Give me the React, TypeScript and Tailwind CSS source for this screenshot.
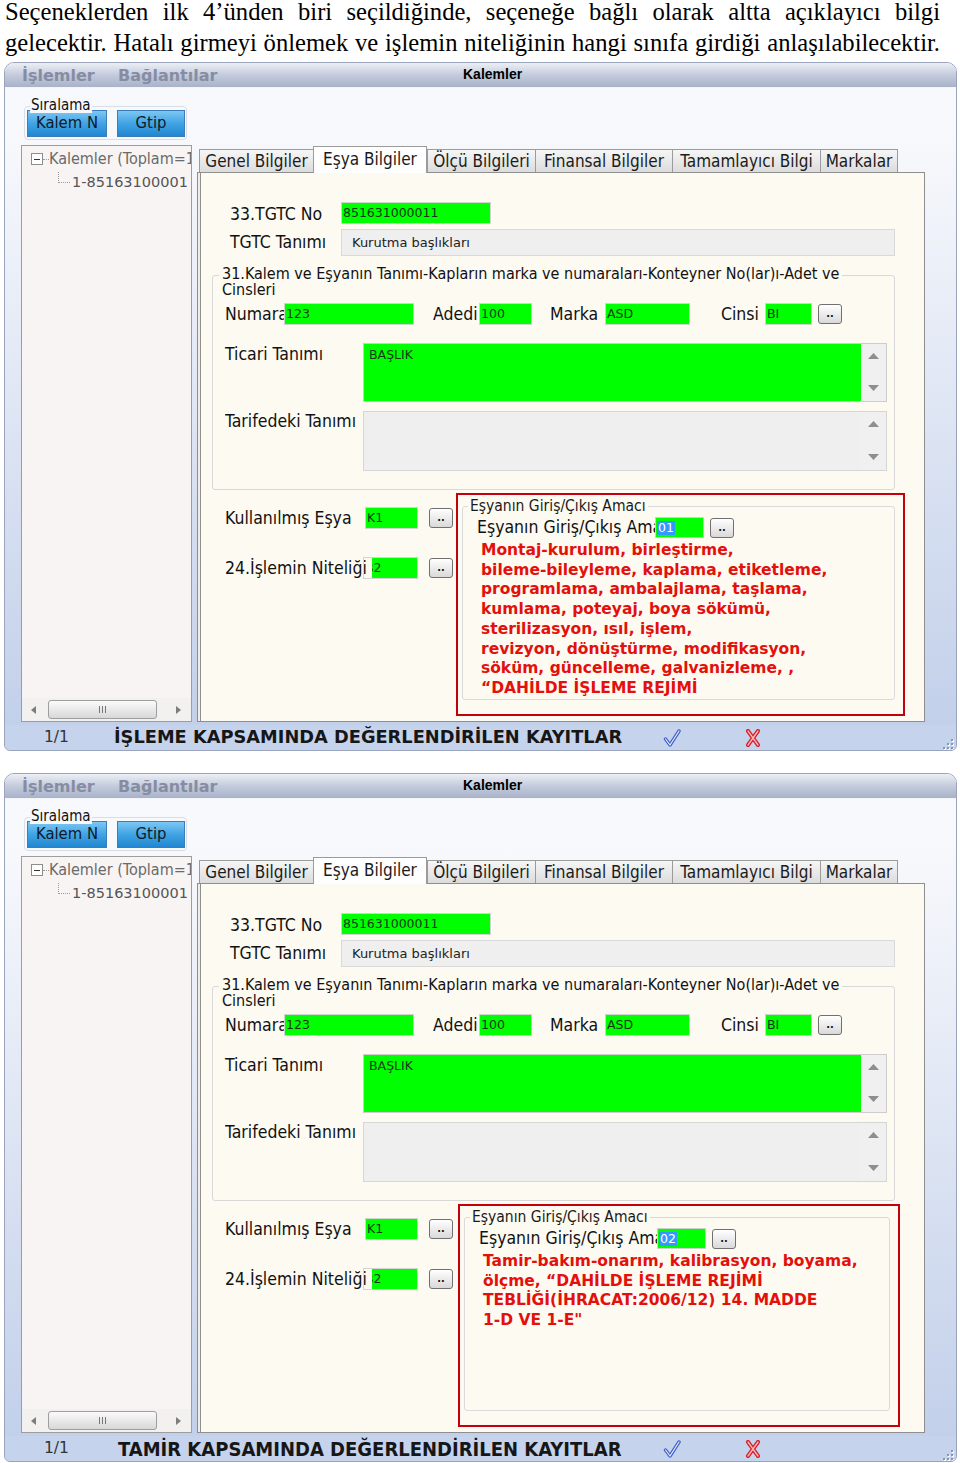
import React from "react";

const ui = "font-['DejaVu_Sans',Verdana,sans-serif] [font-stretch:normal]";
const cond = "font-['DejaVu_Sans_Condensed','DejaVu_Sans',sans-serif] [font-stretch:semi-condensed]";
const arial = "font-['Liberation_Sans',Arial,sans-serif] [font-stretch:normal]";

const islemeLines = [
  "Montaj-kurulum, birleştirme,",
  "bileme-bileyleme, kaplama, etiketleme,",
  "programlama, ambalajlama, taşlama,",
  "kumlama, poteyaj, boya sökümü,",
  "sterilizasyon, ısıl, işlem,",
  "revizyon, dönüştürme, modifikasyon,",
  "söküm, güncelleme, galvanizleme, ,",
  "“DAHİLDE İŞLEME REJİMİ",
];

const tamirLines = [
  "Tamir-bakım-onarım, kalibrasyon, boyama,",
  "ölçme, “DAHİLDE İŞLEME REJİMİ",
  "TEBLİĞİ(İHRACAT:2006/12) 14. MADDE",
  "1-D VE 1-E\"",
];

const Dots = () => (
  <div className="flex h-[20px] w-[24px] shrink-0 items-end justify-center rounded-[3px] border border-[#707070] bg-gradient-to-b from-white to-[#d9d9d9] pb-[4px] text-[11px] font-bold leading-[11px] text-[#111]">
    ..
  </div>
);

const Green = ({ w, text }: { w: string; text: React.ReactNode }) => (
  <div className={`flex h-[22px] ${w} shrink-0 items-center overflow-hidden border border-[#cdd6cd] bg-[#00ff00] pl-[1px] text-[12.5px] leading-none text-[#163816] ${ui}`}>
    {text}
  </div>
);

const Arrow = ({ up }: { up?: boolean }) => (
  <svg width="11" height="6" viewBox="0 0 11 6">
    <path d={up ? "M0 6 L5.5 0 L11 6 Z" : "M0 0 L5.5 6 L11 0 Z"} fill="#8e8e8e" />
  </svg>
);

const ScrollCol = () => (
  <div className="flex w-[25px] shrink-0 flex-col items-center justify-between bg-[#f0f0f0] pb-[10px] pt-[9px]">
    <Arrow up />
    <Arrow />
  </div>
);

const Check = () => (
  <svg width="18" height="18" viewBox="0 0 18 18">
    <path d="M2.5 10 L7 16 L16 2" fill="none" stroke="#3c5cc6" strokeWidth="3.4" strokeLinejoin="round" strokeLinecap="round" />
    <path d="M2.5 10 L7 16 L16 2" fill="none" stroke="#e8eeff" strokeWidth="1.2" strokeLinejoin="round" strokeLinecap="round" />
  </svg>
);

const Cross = () => (
  <svg width="16" height="18" viewBox="0 0 16 18">
    <path d="M3 2 L13 16 M13 2 L3 16" stroke="#d21f2c" strokeWidth="4" strokeLinecap="round" />
    <path d="M3 2 L13 16 M13 2 L3 16" stroke="#ffb3b3" strokeWidth="1.4" strokeLinecap="round" />
  </svg>
);

const Grip = () => (
  <svg width="13" height="13" viewBox="0 0 13 13">
    {[
      [10, 2],
      [6, 6],
      [10, 6],
      [2, 10],
      [6, 10],
      [10, 10],
    ].map(([x, y]) => (
      <g key={`${x}-${y}`}>
        <rect x={x + 1} y={y + 1} width="2" height="2" fill="#ffffff" />
        <rect x={x} y={y} width="2" height="2" fill="#8796b2" />
      </g>
    ))}
  </svg>
);

function Tree() {
  return (
    <div className="flex h-[577px] w-[171px] shrink-0 flex-col overflow-hidden border border-[#9d9d9d] bg-[#f8f4f3]">
      <div className="flex-1">
        <div className="mt-[4px] flex h-[18px] items-center pl-[9px]">
          <div className="flex h-[12px] w-[12px] shrink-0 items-center justify-center border border-[#8e8e8e] bg-white">
            <div className="h-[1px] w-[6px] bg-[#333]" />
          </div>
          <div className="w-[6px] shrink-0 border-t border-dotted border-[#9a9a9a]" />
          <span className={`whitespace-nowrap text-[16px] leading-none text-[#6a6a6a] ${cond}`}>Kalemler (Toplam=1)</span>
        </div>
        <div className="mt-[5px] flex h-[18px] items-center pl-[36px]">
          <div className="mb-[9px] h-[11px] w-[12px] shrink-0 border-b border-l border-dotted border-[#9a9a9a]" />
          <span className={`ml-[2px] whitespace-nowrap text-[14.5px] leading-none text-[#555] ${ui}`}>1-85163100001</span>
        </div>
      </div>
      <div className="flex h-[23px] shrink-0 items-center bg-[#f3f0f0]">
        <svg className="ml-[9px]" width="5" height="8" viewBox="0 0 5 8">
          <path d="M5 0 L0 4 L5 8 Z" fill="#7d7d7d" />
        </svg>
        <div className="ml-[12px] flex h-[19px] w-[109px] items-center justify-center gap-[2px] rounded-[3px] border border-[#9e9e9e] bg-gradient-to-b from-[#fbfbfb] to-[#d8d8d8]">
          <div className="h-[7px] w-[1px] bg-[#777]" />
          <div className="h-[7px] w-[1px] bg-[#777]" />
          <div className="h-[7px] w-[1px] bg-[#777]" />
        </div>
        <svg className="ml-[19px]" width="5" height="8" viewBox="0 0 5 8">
          <path d="M0 0 L5 4 L0 8 Z" fill="#7d7d7d" />
        </svg>
      </div>
    </div>
  );
}

function Tabs() {
  const tabs: [string, string, boolean?][] = [
    ["Genel Bilgiler", "w-[114px]"],
    ["Eşya Bilgiler", "w-[114px]", true],
    ["Ölçü Bilgileri", "w-[108px]"],
    ["Finansal Bilgiler", "w-[137px]"],
    ["Tamamlayıcı Bilgi", "w-[148px]"],
    ["Markalar", "w-[78px]"],
  ];
  return (
    <div className={`flex h-[27px] shrink-0 items-end pl-[2px] text-[17px] text-[#1b1b1b] ${cond}`}>
      {tabs.map(([label, w, active]) => (
        <div
          key={label}
          className={`${w} flex shrink-0 items-center justify-center whitespace-nowrap border-l border-t border-[#9b9b9b] ${
            active
              ? "relative z-10 -mb-px h-[27px] border-r bg-[#fefefe]"
              : "h-[23px] bg-gradient-to-b from-[#f6f6f6] to-[#dcdcdc] pt-[2px] last:border-r"
          }`}
        >
          {label}
        </div>
      ))}
    </div>
  );
}

function RedBox({ code, lines, box }: { code: string; lines: string[]; box: string }) {
  return (
    <div className={`h-[223px] shrink-0 border-2 border-[#c3000c] ${box}`}>
      <div className="ml-[4px] mr-[8px] mt-[11px] flex h-[194px] flex-col rounded-[3px] border border-[#dadada]">
        <div className={`-mt-[8px] ml-[5px] self-start bg-[#fdfaf1] px-[2px] text-[15.5px] leading-[15px] text-[#1a1a1a] ${cond}`}>
          Eşyanın Giriş/Çıkış Amacı
        </div>
        <div className="mt-[3px] flex h-[21px] items-center pl-[14px]">
          <span className={`w-[178px] shrink-0 overflow-hidden whitespace-nowrap text-[17.5px] text-[#111] ${cond}`}>
            Eşyanın Giriş/Çıkış Amacı
          </span>
          <div className="flex h-[21px] w-[49px] shrink-0 items-center border border-[#c9d3c9] bg-[#00ff00] pl-[1px]">
            <span className={`bg-[#3399ff] px-[1px] text-[12.5px] leading-[14px] text-white ${ui}`}>{code}</span>
          </div>
          <div className="ml-[6px]">
            <Dots />
          </div>
        </div>
        <div className={`mt-[3px] pl-[18px] text-[15.5px] font-bold leading-[19.7px] text-[#e3100b] ${ui}`}>
          {lines.map((l) => (
            <div key={l} className="whitespace-nowrap">
              {l}
            </div>
          ))}
        </div>
      </div>
    </div>
  );
}

function Panel({ code, lines, box }: { code: string; lines: string[]; box: string }) {
  return (
    <div className={`h-[550px] border border-[#8e8e8e] bg-[#fdfaf1] text-[17.5px] text-[#111] shadow-[inset_2px_0_0_#efede6,inset_3px_0_0_#8e8e8e] ${cond}`}>
      <div className="mt-[29px] flex h-[22px] items-center pl-[32px]">
        <span className="w-[111px] shrink-0 whitespace-nowrap pt-[3px]">33.TGTC No</span>
        <Green w="w-[150px]" text="851631000011" />
      </div>
      <div className="mt-[5px] flex h-[27px] items-center pl-[32px]">
        <span className="w-[111px] shrink-0 whitespace-nowrap">TGTC Tanımı</span>
        <div className={`flex h-[27px] w-[554px] items-center border border-[#d9d9d9] bg-[#efefef] pl-[10px] text-[13px] text-[#222] ${ui}`}>
          Kurutma başlıkları
        </div>
      </div>

      <div className="ml-[14px] mt-[19px] flex h-[215px] w-[683px] flex-col rounded-[3px] border border-[#d8d8d8]">
        <div className="-mt-[10px] ml-[6px] self-start bg-[#fdfaf1] px-[3px] text-[16px] leading-[16px]">
          31.Kalem ve Eşyanın Tanımı-Kapların marka ve numaraları-Konteyner No(lar)ı-Adet ve
          <br />
          Cinsleri
        </div>
        <div className="mt-[5px] flex h-[22px] items-center pl-[12px]">
          <span className="w-[59px] shrink-0 overflow-hidden whitespace-nowrap">Numara</span>
          <Green w="w-[130px]" text="123" />
          <span className="ml-[19px] w-[46px] shrink-0 overflow-hidden whitespace-nowrap">Adedi</span>
          <Green w="w-[53px]" text="100" />
          <span className="ml-[18px] w-[55px] shrink-0 whitespace-nowrap">Marka</span>
          <Green w="w-[85px]" text="ASD" />
          <span className="ml-[31px] w-[44px] shrink-0 whitespace-nowrap">Cinsi</span>
          <Green w="w-[47px]" text="BI" />
          <div className="ml-[6px]">
            <Dots />
          </div>
        </div>
        <div className="mt-[18px] flex pl-[12px]">
          <span className="w-[138px] shrink-0 whitespace-nowrap pt-[1px] leading-[20px]">Ticari Tanımı</span>
          <div className="flex h-[59px] w-[524px] border border-[#cdcdcd]">
            <div className={`flex-1 bg-[#00ff00] pl-[5px] pt-[4px] text-[12.5px] leading-[13px] text-[#163816] ${ui}`}>BAŞLIK</div>
            <ScrollCol />
          </div>
        </div>
        <div className="mt-[9px] flex pl-[12px]">
          <span className="w-[138px] shrink-0 overflow-hidden whitespace-nowrap leading-[20px]">Tarifedeki Tanımı</span>
          <div className="flex h-[60px] w-[524px] border border-[#d6d6d6]">
            <div className="flex-1 bg-[#efefef]" />
            <ScrollCol />
          </div>
        </div>
      </div>

      <div className="mt-[3px] flex">
        <div className="w-[258px] shrink-0 pl-[27px]">
          <div className="mt-[14px] flex h-[22px] items-center">
            <span className="w-[140px] shrink-0 whitespace-nowrap">Kullanılmış Eşya</span>
            <Green w="w-[53px]" text="K1" />
            <div className="ml-[11px]">
              <Dots />
            </div>
          </div>
          <div className="mt-[28px] flex h-[22px] items-center">
            <span className="w-[138px] shrink-0 whitespace-nowrap">24.İşlemin Niteliği</span>
            <div className="flex h-[22px] w-[55px] shrink-0 border border-[#d4d4d4]">
              <div className={`ml-[8px] flex flex-1 items-center overflow-hidden bg-[#00ff00] text-[12.5px] leading-none text-[#163816] ${ui}`}>
                <span className="-ml-[7px]">B2</span>
              </div>
            </div>
            <div className="ml-[11px]">
              <Dots />
            </div>
          </div>
        </div>
        <RedBox code={code} lines={lines} box={box} />
      </div>
    </div>
  );
}

function AppWindow({
  code,
  lines,
  status,
  statusFont,
  countW,
  statusW,
  box,
}: {
  code: string;
  lines: string[];
  status: string;
  statusFont: string;
  countW: string;
  statusW: string;
  box: string;
}) {
  return (
    <div className={`flex h-[689px] w-[953px] flex-col overflow-hidden rounded-b-[6px] rounded-t-[10px] border border-[#9aa5bd] bg-gradient-to-b from-[#f8f9fc] from-[10%] to-[#c0cee9] ${ui}`}>
      {/* title */}
      <div className="flex h-[25px] shrink-0 items-center border-b border-[#f3f5f9] bg-gradient-to-b from-[#eceff5] via-[#c4cbdc] to-[#a8b2c9] pt-[2px]">
        <span className="ml-[17px] w-[96px] shrink-0 text-[16px] font-bold text-[#868da3]">İşlemler</span>
        <span className="w-[345px] shrink-0 text-[16px] font-bold text-[#868da3]">Bağlantılar</span>
        <span className={`-mt-[3px] text-[14px] font-bold text-black ${arial}`}>Kalemler</span>
      </div>

      {/* sıralama */}
      <div className="h-[57px] shrink-0 pl-[19px] pt-[18px]">
        <div className="relative h-[34px] w-[163px] rounded-[4px] border border-[#d9dde6]">
          <span className={`absolute -top-[9px] left-[5px] bg-[#f6f7fa] px-[1px] text-[15px] leading-[15px] text-[#111] ${cond}`}>Sıralama</span>
          <div className={`flex gap-[10px] pl-[2px] pt-[3px] text-[16.5px] text-[#0e1a28] ${cond}`}>
            <div className="flex h-[27px] w-[80px] items-center justify-center border border-[#3a7db9] bg-gradient-to-b from-[#7cc7f3] via-[#3fa3e4] to-[#2287d1]">
              Kalem N
            </div>
            <div className="flex h-[27px] w-[68px] items-center justify-center border border-[#3a7db9] bg-gradient-to-b from-[#7cc7f3] via-[#3fa3e4] to-[#2287d1]">
              Gtip
            </div>
          </div>
        </div>
      </div>

      {/* main */}
      <div className="flex h-[577px] shrink-0 pl-[16px]">
        <Tree />
        <div className="w-[5px] shrink-0" />
        <div className="flex w-[728px] shrink-0 flex-col">
          <Tabs />
          <Panel code={code} lines={lines} box={box} />
        </div>
      </div>
      <div className="h-[3px] shrink-0" />

      {/* status */}
      <div className="flex h-[25px] shrink-0 items-center bg-[#c6d3ec]">
        <span className={`ml-[39px] ${countW} shrink-0 text-[15.5px] text-[#333] ${ui}`}>1/1</span>
        <span className={`${statusW} shrink-0 whitespace-nowrap text-[#161616] ${statusFont}`}>{status}</span>
        <div className="w-[82px] shrink-0">
          <Check />
        </div>
        <Cross />
        <div className="ml-auto mr-[2px] self-end">
          <Grip />
        </div>
      </div>
    </div>
  );
}

export default function App() {
  return (
    <div className="min-h-[1463px] w-[960px] bg-white">
      <div className="ml-[5px] w-[935px] font-['Liberation_Serif','Times_New_Roman',serif] text-[24.6px] text-black">
        <div className="text-justify leading-[24px] [text-align-last:justify]">
          Seçeneklerden ilk 4’ünden biri seçildiğinde, seçeneğe bağlı olarak altta açıklayıcı bilgi
        </div>
        <div className="mt-[7px] text-justify leading-[24px] [text-align-last:justify]">
          gelecektir. Hatalı girmeyi önlemek ve işlemin niteliğinin hangi sınıfa girdiği anlaşılabilecektir.
        </div>
      </div>
      <div className="ml-[4px] mt-[7px]">
        <AppWindow
          code="01"
          lines={islemeLines}
          status="İŞLEME KAPSAMINDA DEĞERLENDİRİLEN KAYITLAR"
          statusFont={`text-[17.8px] font-bold ${ui}`}
          countW="w-[70px]"
          statusW="w-[549px]"
          box="w-[449px]"
        />
      </div>
      <div className="ml-[4px] mt-[22px]">
        <AppWindow
          code="02"
          lines={tamirLines}
          status="TAMİR KAPSAMINDA DEĞERLENDİRİLEN KAYITLAR"
          statusFont={`text-[20px] font-bold ${cond}`}
          countW="w-[74px]"
          statusW="w-[545px]"
          box="ml-[2px] w-[442px]"
        />
      </div>
    </div>
  );
}
